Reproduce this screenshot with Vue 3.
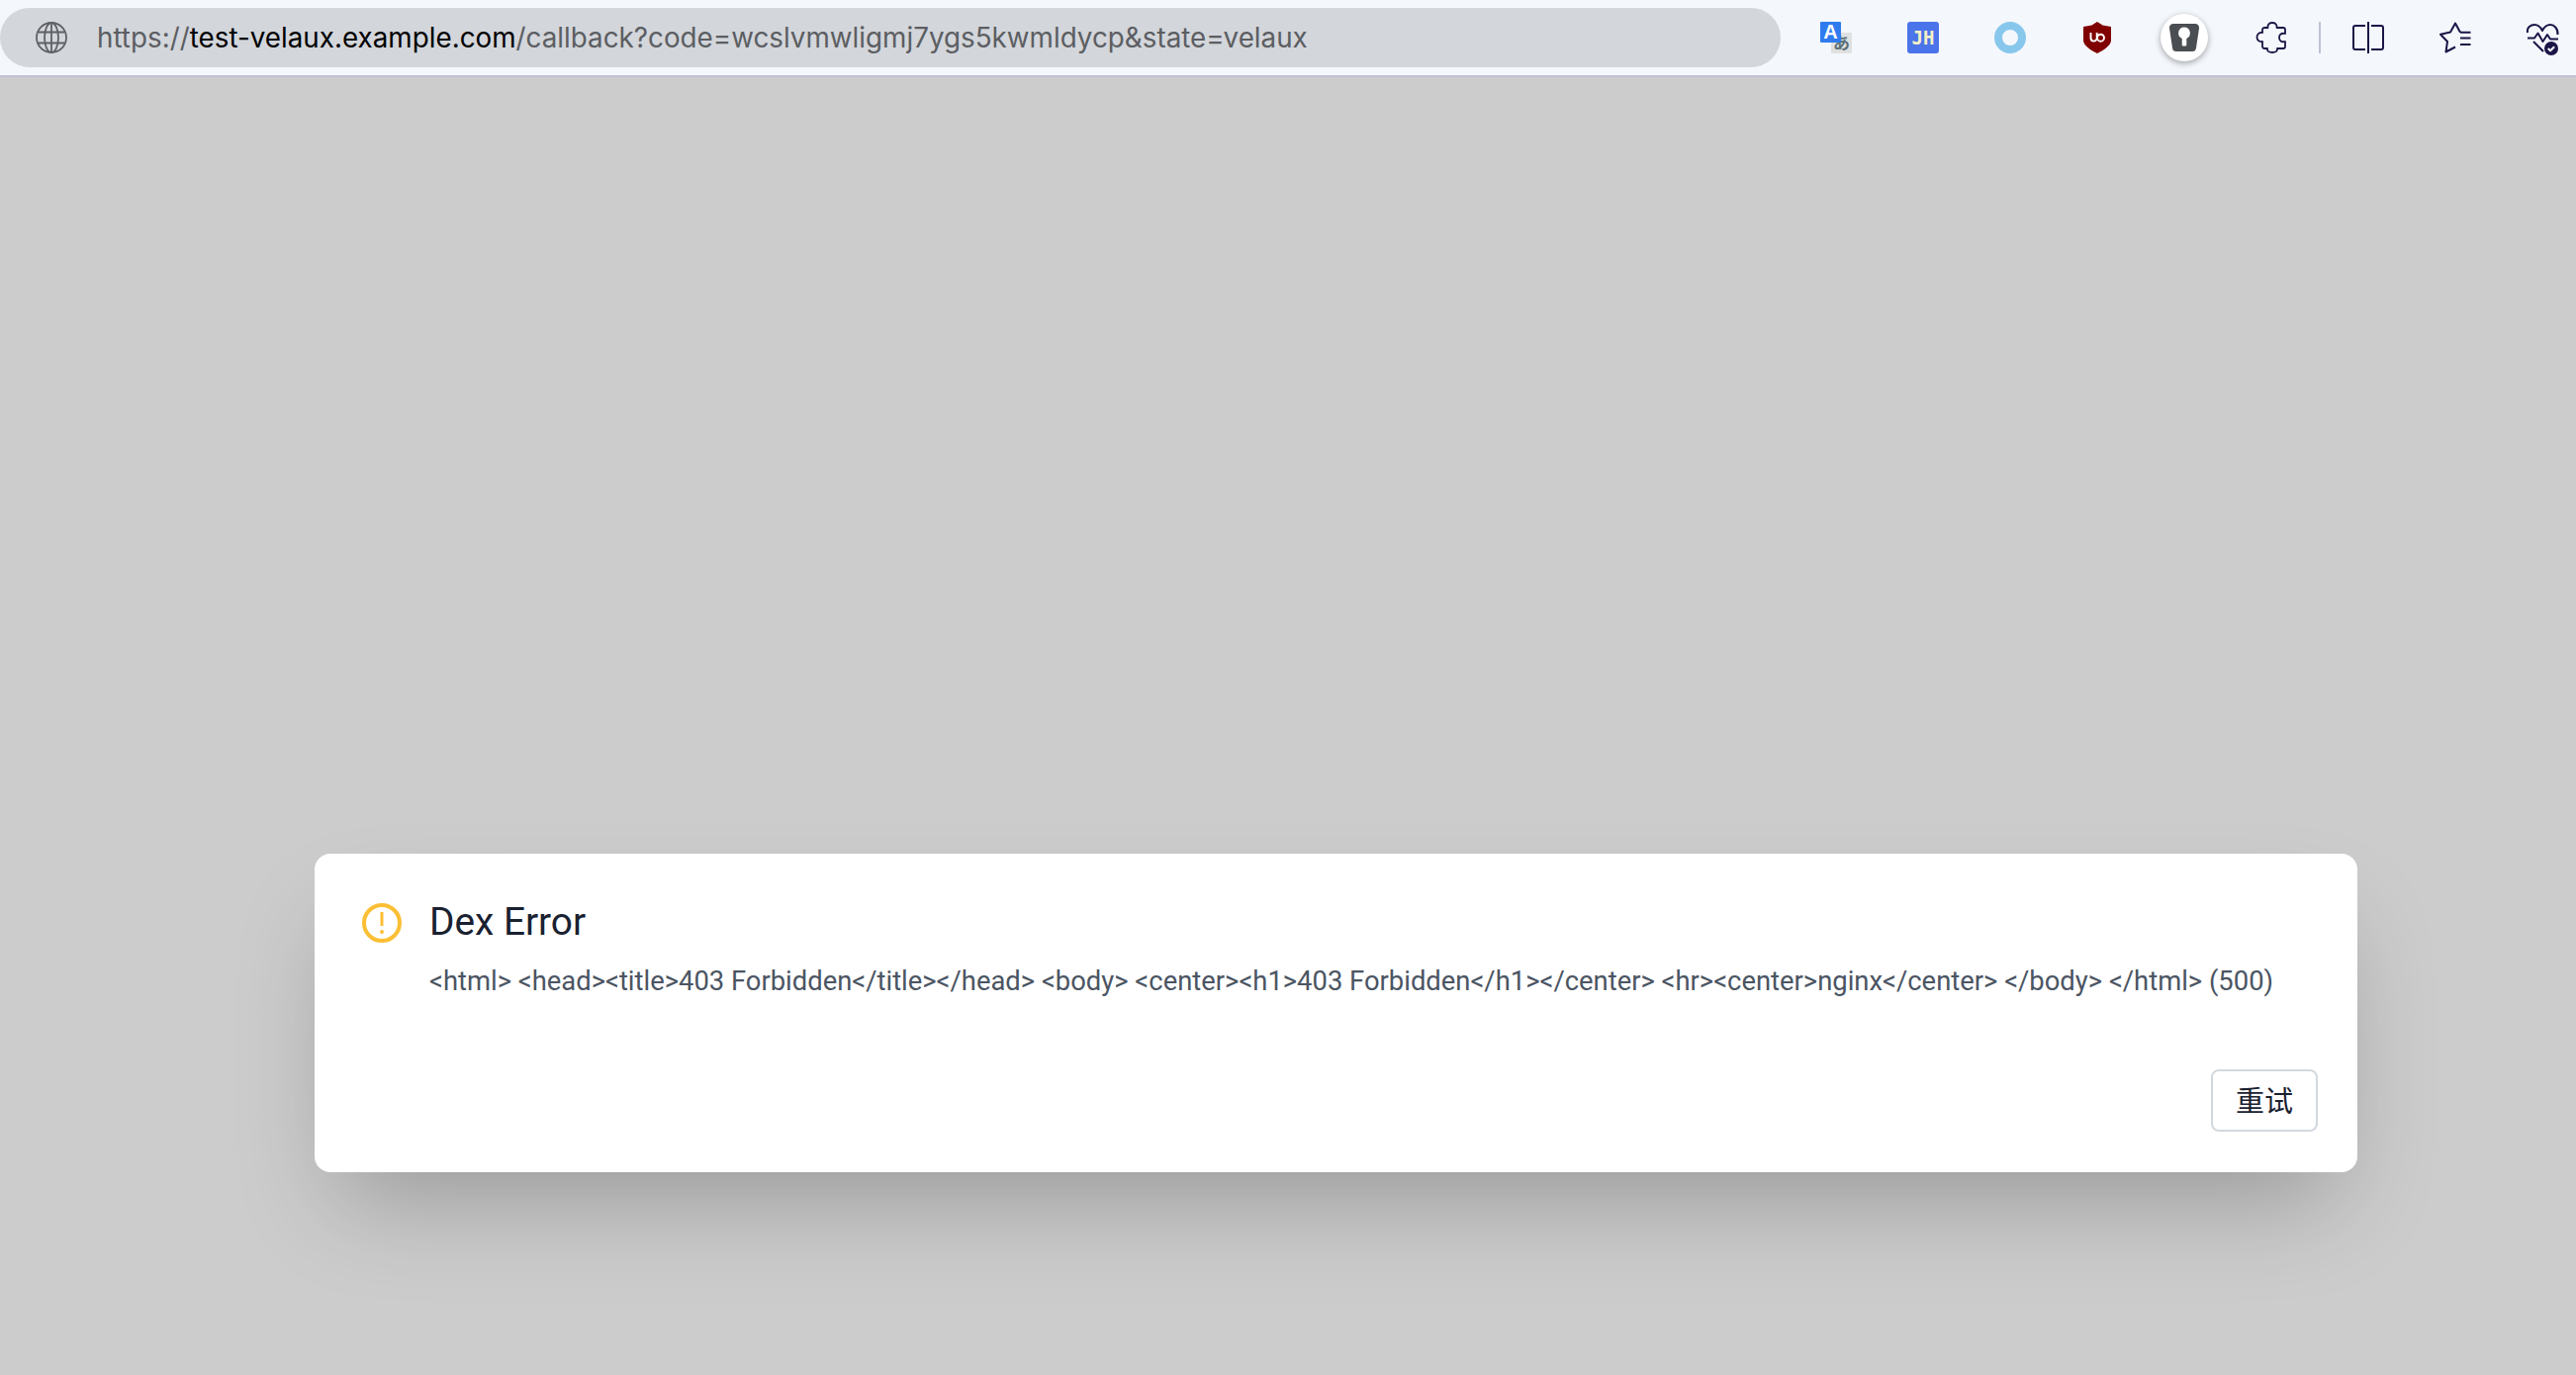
<script setup>
const url = { a: 'https://', b: 'test-velaux.example.com', c: '/callback?code=wcslvmwligmj7ygs5kwmldycp&state=velaux' }
const message = '<html> <head><title>403 Forbidden</title></head> <body> <center><h1>403 Forbidden</h1></center> <hr><center>nginx</center> </body> </html> (500)'
</script>

<template>
  <div class="page">
    <header class="toolbar">
      <div class="address">
        <svg class="globe" viewBox="0 0 32 32" fill="none" stroke="#5f6165" stroke-width="1.8">
          <circle cx="16" cy="16" r="15" />
          <ellipse cx="16" cy="16" rx="7" ry="15" />
          <path d="M16 1v30M3 10.500h26M3 21.500h26" />
        </svg>
        <span class="url"><span>{{ url.a }}</span><b>{{ url.b }}</b><span>{{ url.c }}</span></span>
      </div>
      <div class="icons">
        <svg class="ico" viewBox="0 0 32 32">
          <rect x="11" y="11" width="21" height="21" rx="1" fill="#dfe1e0" />
          <text x="21.500" y="28" class="kana">あ</text>
          <rect x="0" y="0" width="21" height="21" rx="1" fill="#2f7bee" />
          <text x="10.500" y="17" class="latin">A</text>
        </svg>
        <svg class="ico" viewBox="0 0 32 32">
          <rect width="32" height="32" rx="3" fill="#4b74ea" />
          <text x="16" y="22.800" class="jh">JH</text>
        </svg>
        <svg class="ico" viewBox="0 0 32 32">
          <circle cx="16" cy="16" r="12" fill="none" stroke="#88c7ec" stroke-width="8" />
        </svg>
        <svg class="ico" viewBox="0 0 32 32">
          <path d="M16 0l5.500 3.500L30 5v14c0 5-8 10-14 13C10 29 2 24 2 19V5l8.500-1.500z" fill="#800000" />
          <path d="M9.500 11v5.500a3.100 3.100 0 0 0 6.200 0V11" fill="none" stroke="#fff" stroke-width="1.900" />
          <circle cx="19.500" cy="16.200" r="3.500" fill="none" stroke="#fff" stroke-width="1.900" />
        </svg>
        <div class="keeper">
          <svg viewBox="0 0 32 32" width="32" height="32">
            <path d="M5 2h22a4 4 0 0 1 4 4.500l-3 20a4 4 0 0 1-4 3.500H8a4 4 0 0 1-4-3.500l-3-20A4 4 0 0 1 5 2z" fill="#4a4d52" />
            <path d="M16 5.500a6 6 0 0 1 2.300 11.500V23.500a1 1 0 0 1-1 1h-2.600a1 1 0 0 1-1-1V17A6 6 0 0 1 16 5.500z" fill="#fff" />
          </svg>
        </div>
        <svg class="ico" viewBox="0 0 32 32" fill="none" stroke="#1b1547" stroke-width="1.800" stroke-linejoin="round">
          <path d="M12.500 6C12 2.500 14.500 1 17 1s5 1.500 4.500 5H28a2 2 0 0 1 2 2v4c-4-1-6 1-6 4s2 5 6 4v5a2 2 0 0 1-2 2h-6c.5 3-2 4-5 4s-5.500-1-5-4H9a2 2 0 0 1-2-2v-5c-4 .5-5.500-2-5.500-4.500S3.500 10.500 7 11V8a2 2 0 0 1 2-2z" />
        </svg>
        <span class="sep"></span>
        <svg class="ico" viewBox="0 0 32 32" fill="none" stroke="#1b1547" stroke-width="2">
          <path d="M13 4H3a2 2 0 0 0-2 2v20a2 2 0 0 0 2 2h10M19 4h10a2 2 0 0 1 2 2v20a2 2 0 0 1-2 2H19M16 0v32" />
        </svg>
        <svg class="ico" viewBox="0 0 32 32" fill="none" stroke="#1b1547" stroke-width="2" stroke-linejoin="round">
          <path d="M21 10.700L16 1.500l-5 9-10 2.200L8 20 6.500 30.500l9.500-5" />
          <path d="M21 10.700h10.500M21 16.500h10.500M21 23h10.500" />
        </svg>
        <svg class="ico" viewBox="0 0 32 32" fill="none" stroke="#1b1547" stroke-width="2" stroke-linejoin="round">
          <path d="M1 11C0 5 5 3 8 3s6 2 8 6c2-4 5-6 8-6 4 0 8 4 7.500 10" />
          <path d="M1 16.500h7l3.500-5 5 8.500 4.500-7 3 4.500h8M7 20l10 10" />
          <circle cx="25" cy="27" r="7" fill="#1b1547" stroke="none" />
          <path d="M21.800 27l2.300 2.300 4-4" stroke="#fff" />
        </svg>
      </div>
    </header>

    <main class="stage">
      <section class="dialog">
        <div class="head">
          <svg class="warn" viewBox="0 0 40 40" fill="none" stroke="#fbbf35" stroke-width="4">
            <circle cx="20" cy="20" r="18" />
            <path d="M20 9v14" stroke-width="3" />
            <circle cx="20" cy="29" r="2" fill="#fbbf35" stroke="none" />
          </svg>
          <h2>Dex Error</h2>
        </div>
        <p>{{ message }}</p>
        <div class="actions"><button type="button">重试</button></div>
      </section>
    </main>
  </div>
</template>

<style>
html, body { margin: 0; background: #ccc; }
</style>

<style scoped>
.page { width: 2604px; height: 1390px; display: flex; flex-direction: column; overflow: hidden; background: #ccc; }
.toolbar { height: 76px; flex: none; display: flex; align-items: center; background: #f4f7fc; border-bottom: 2px solid #bfc0d6; }
.address { width: 1800px; height: 60px; flex: none; box-sizing: border-box; padding-left: 36px; display: flex; align-items: center; background: #d3d6db; border-radius: 30px; }
.globe { width: 32px; height: 32px; margin-right: 30px; flex: none; }
.url { font: 27.800px/60px Inter, sans-serif; color: #5c5e62; white-space: nowrap; }
.url b { font-weight: 400; color: #000; }
.icons { display: flex; align-items: center; padding-left: 40px; gap: 56px; }
.ico { width: 32px; height: 32px; flex: none; overflow: visible; }
.keeper { width: 48px; height: 48px; margin: 0 -8px; flex: none; border-radius: 50%; background: #fff; box-shadow: 0 2px 6px rgba(0, 0, 0, .35); display: flex; align-items: center; justify-content: center; }
.sep { width: 2px; height: 32px; background: #c0c1d3; margin: 0 -24px; flex: none; }
.kana { font: 700 17px "Noto Sans CJK JP", sans-serif; fill: #5b7079; text-anchor: middle; }
.latin { font: 700 20px "Liberation Sans", sans-serif; fill: #fff; text-anchor: middle; }
.jh { font: 700 19px "DejaVu Sans Mono", monospace; fill: #f6f0c8; text-anchor: middle; }
.stage { flex: 1; display: flex; align-items: flex-end; padding: 0 0 205px 318px; }
.dialog { width: 2065px; height: 322px; box-sizing: border-box; padding: 48px 40px 0 48px; background: #fff; border-radius: 16px; box-shadow: 0 50px 100px -24px rgba(0, 0, 0, .25); display: flex; flex-direction: column; font-family: Roboto, sans-serif; }
.head { display: flex; align-items: center; gap: 28px; height: 44px; }
.warn { width: 40px; height: 40px; flex: none; }
h2 { margin: -2px 0 0; font-size: 38.800px; line-height: 44px; font-weight: 400; color: #1a2130; }
p { margin: 17px 0 0 68px; font-size: 27.400px; line-height: 40px; color: #4b5563; white-space: nowrap; }
.actions { margin-top: auto; padding-bottom: 41px; display: flex; justify-content: flex-end; }
button { width: 108px; height: 63px; box-sizing: border-box; background: #fff; border: 2px solid #d3d8df; border-radius: 8px; font: 29px "Noto Sans CJK SC", sans-serif; color: #1a2130; padding: 0 0 4px; }
</style>
